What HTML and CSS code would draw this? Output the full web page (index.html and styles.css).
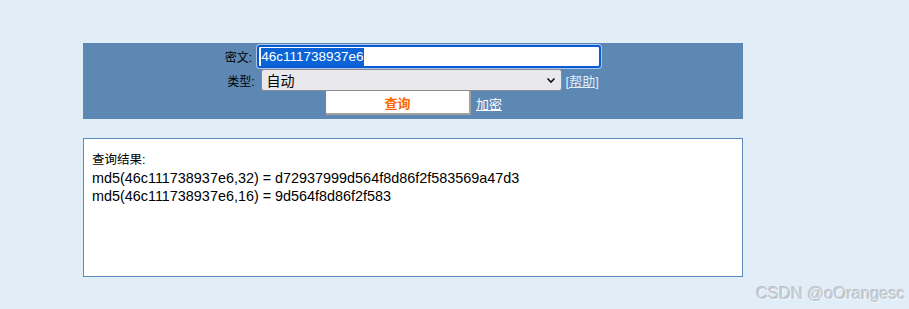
FILE: index.html
```html
<!DOCTYPE html>
<html lang="zh-CN">
  <head>
    <meta charset="UTF-8" />
    <meta name="viewport" content="width=device-width, initial-scale=1.0" />
    <title>MD5 解密</title>
    <link rel="stylesheet" href="styles.css">
  </head>
  <body>
    <div class="wrap">
      <form class="panel" id="queryForm">
        <div class="row">
          <label class="label">密文:</label>
          <div class="text-input"><span class="sel">46c111738937e6</span></div>
        </div>
        <div class="row">
          <label class="label">类型:</label>
          <div class="select">
            <span>自动</span>
            <svg class="chev" width="10" height="7" viewBox="0 0 10 7">
              <path d="M1.5 1.5 L5 5 L8.5 1.5" fill="none" stroke="#111" stroke-width="1.6" />
            </svg>
          </div>
          <a class="help" href="#">[帮助]</a>
        </div>
        <div class="row">
          <button type="button" class="btn">查询</button>
          <a class="link" href="#">加密</a>
        </div>
      </form>

      <div class="result">
        <div class="result-title">查询结果:</div>
        <div class="result-line">md5(46c111738937e6,32) = d72937999d564f8d86f2f583569a47d3</div>
        <div class="result-line">md5(46c111738937e6,16) = 9d564f8d86f2f583</div>
      </div>
    </div>

    <div class="watermark">CSDN @oOrangesc</div>
  </body>
</html>
```

FILE: styles.css
```css
body {
  margin: 0;
  background-color: #e1edf7;
  font-family: "Liberation Sans", "Noto Sans CJK SC", sans-serif;
  color: #000;
  height: 309px;
  position: relative;
  overflow: hidden;
}
.wrap {
  width: 660px;
  margin-left: 83px;
  padding-top: 43px;
}
.panel {
  background-color: #5c88b3;
  height: 76px;
  padding-top: 2px;
  box-sizing: border-box;
  display: flex;
  flex-direction: column;
  align-items: center;
}
.row {
  display: flex;
  align-items: center;
  justify-content: center;
}
.label {
  font-size: 12px;
  margin-right: 4px;
}
.text-input {
  width: 338px;
  height: 19px;
  background: #fff;
  border: 2px solid #0a5ad4;
  border-radius: 3px;
  box-shadow: 0 0 0 1px #a9c6ec;
  display: flex;
  align-items: center;
  padding-left: 2px;
  box-sizing: content-box;
  font-size: 13.5px;
  margin-left: 1px;
}
.sel {
  background: #0a64d8;
  color: #fff;
  line-height: 18px;
}
.row:nth-child(2) {
  margin-top: 1px;
}
.select {
  width: 289px;
  height: 20px;
  margin-left: 2px;
  background: #e9e8ed;
  border: 1px solid #8a8a8f;
  border-radius: 3px;
  display: flex;
  align-items: center;
  justify-content: space-between;
  padding: 0 5px;
  font-size: 14px;
  box-sizing: content-box;
}
.help {
  font-size: 13px;
  color: #e4ecf8;
  margin-left: 4px;
}
.btn {
  width: 145px;
  height: 24px;
  background: #fff;
  border: none;
  border-right: 2px solid #a0a0a0;
  border-bottom: 2px solid #a0a0a0;
  color: #ff6600;
  font-weight: bold;
  font-size: 13px;
  font-family: "Liberation Sans", "Noto Sans CJK SC", sans-serif;
  padding: 0;
  margin-left: 2px;
  cursor: pointer;
}
.link {
  font-size: 13px;
  color: #fff;
  margin-left: 5px;
}
.result {
  margin-top: 19px;
  height: 139px;
  box-sizing: border-box;
  background: #fff;
  border: 1px solid #5a8ac0;
  padding: 12px 8px 0;
}
.result-title {
  font-size: 12.5px;
  line-height: 18px;
}
.result-line {
  font-size: 14.4px;
  line-height: 18px;
}
.watermark {
  position: absolute;
  right: 4px;
  bottom: 6px;
  font-size: 16.5px;
  color: #c4ccd4;
  text-shadow: 1px 1px 0 #f4f8fb, -1px -1px 0 #b8c0c8;
  font-family: "Liberation Sans", sans-serif;
}
```
